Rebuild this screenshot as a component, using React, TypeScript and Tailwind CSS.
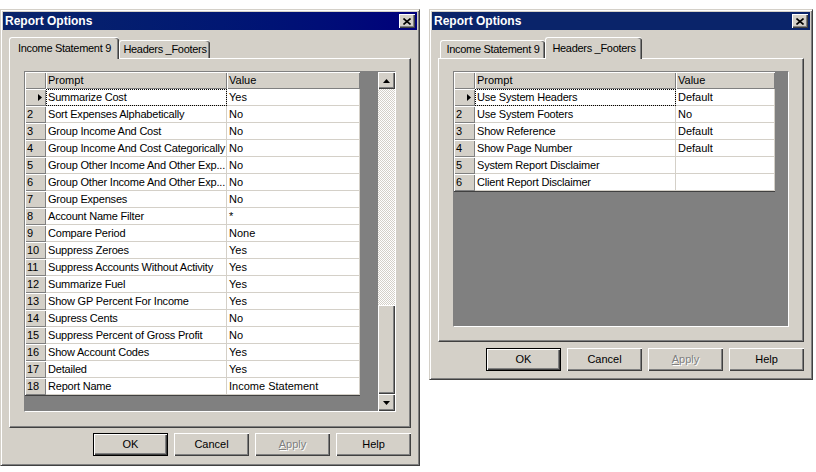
import React from 'react';

type Row = [string, string];

const incomeRows: Row[] = [
  ['Summarize Cost', 'Yes'],
  ['Sort Expenses Alphabetically', 'No'],
  ['Group Income And Cost', 'No'],
  ['Group Income And Cost Categorically', 'No'],
  ['Group Other Income And Other Exp...', 'No'],
  ['Group Other Income And Other Exp...', 'No'],
  ['Group Expenses', 'No'],
  ['Account Name Filter', '*'],
  ['Compare Period', 'None'],
  ['Suppress Zeroes', 'Yes'],
  ['Suppress Accounts Without Activity', 'Yes'],
  ['Summarize Fuel', 'Yes'],
  ['Show GP Percent For Income', 'Yes'],
  ['Supress Cents', 'No'],
  ['Suppress Percent of Gross Profit', 'No'],
  ['Show Account Codes', 'Yes'],
  ['Detailed', 'Yes'],
  ['Report Name', 'Income Statement'],
];

const headerRows: Row[] = [
  ['Use System Headers', 'Default'],
  ['Use System Footers', 'No'],
  ['Show Reference', 'Default'],
  ['Show Page Number', 'Default'],
  ['System Report Disclaimer', ''],
  ['Client Report Disclaimer', ''],
];

const raised =
  'bg-[#d4d0c8] shadow-[inset_1px_1px_0_#ffffff,inset_-1px_-1px_0_#404040,inset_-2px_-2px_0_#808080]';
const headCell = 'bg-[#d4d0c8] shadow-[inset_1px_1px_0_#ffffff,inset_-1px_-1px_0_#808080]';

const Arrow = ({ down }: { down?: boolean }) => (
  <svg width="7" height="4" viewBox="0 0 7 4">
    <polygon points={down ? '0,0 7,0 3.5,4' : '3.5,0 7,4 0,4'} fill="#000" />
  </svg>
);

const RowMark = () => (
  <svg width="4" height="7" viewBox="0 0 4 7">
    <polygon points="0,0 4,3.5 0,7" fill="#000" />
  </svg>
);

interface GridProps {
  rows: Row[];
  promptW: string;
  valueW: string;
  size: string;
  scroll?: boolean;
}

const Grid: React.FC<GridProps> = ({ rows, promptW, valueW, size, scroll }) => (
  <div className={`${size} flex border border-[#808080] border-r-white border-b-white`}>
    <div className="flex-1 bg-[#808080]">
      <div className="w-fit border-b border-[#404040]">
        <div className="flex h-[17px] leading-[16px]">
          <div className={`w-[21px] ${headCell}`} />
          <div className={`${promptW} ${headCell} pl-[2px]`}>Prompt</div>
          <div className={`${valueW} ${headCell} pl-[2px]`}>Value</div>
        </div>
        {rows.map(([p, v], i) => (
          <div key={i} className="flex h-[17px]">
            <div
              className={`w-[21px] ${headCell} leading-[17px] ${
                i === 0 ? 'flex items-center justify-end pr-[4px]' : 'pl-[2px]'
              }`}
            >
              {i === 0 ? <RowMark /> : i + 1}
            </div>
            <div
              className={`${promptW} bg-white border-r border-b border-[#d4d0c8] pl-[2px] leading-[16px] overflow-hidden whitespace-nowrap tracking-[-0.2px] ${
                i === 0 ? '[outline:1px_dotted_#000] [outline-offset:-1px]' : ''
              }`}
            >
              {p}
            </div>
            <div
              className={`${valueW} bg-white border-r border-b border-[#d4d0c8] pl-[2px] leading-[16px] overflow-hidden whitespace-nowrap`}
            >
              {v}
            </div>
          </div>
        ))}
      </div>
    </div>
    {scroll && (
      <div className="w-[17px] flex flex-col">
        <div className={`h-[17px] ${raised} flex items-center justify-center`}>
          <Arrow />
        </div>
        <div className="flex-1 bg-[repeating-conic-gradient(#d4d0c8_0%_25%,#ffffff_0%_50%)] bg-[length:2px_2px]" />
        <div className={`h-[89px] ${raised}`} />
        <div className={`h-[17px] ${raised} flex items-center justify-center`}>
          <Arrow down />
        </div>
      </div>
    )}
  </div>
);

const Buttons = () => (
  <div className="flex justify-end gap-[6px]">
    <button className="w-[75px] h-[23px] border border-black bg-[#d4d0c8] shadow-[inset_1px_1px_0_#ffffff,inset_-1px_-1px_0_#404040,inset_-2px_-2px_0_#808080]">
      OK
    </button>
    <button className={`w-[75px] h-[23px] ${raised}`}>Cancel</button>
    <button className={`w-[75px] h-[23px] ${raised} text-[#808080] [text-shadow:1px_1px_0_#ffffff]`}>
      <span className="underline">A</span>pply
    </button>
    <button className={`w-[75px] h-[23px] ${raised}`}>Help</button>
  </div>
);

const TitleBar = ({ solid }: { solid?: boolean }) => (
  <div
    className={`h-[18px] flex items-center justify-between pl-[2px] pr-[2px] ${
      solid ? 'bg-[#0a246a]' : 'bg-linear-to-r from-[#0a246a] to-[#00007b]'
    }`}
  >
    <span className="text-white font-bold text-[12px]">Report Options</span>
    <div className={`w-[16px] h-[14px] ${raised} flex items-center justify-center`}>
      <svg width="8" height="7" viewBox="0 0 8 7">
        <path d="M0.5 0.5 L7.5 6.5 M7.5 0.5 L0.5 6.5" stroke="#000" strokeWidth="1.6" />
      </svg>
    </div>
  </div>
);

const tabOn =
  'h-[22px] -mb-px relative z-10 bg-[#d4d0c8] border-t border-l border-white rounded-t-[3px] shadow-[inset_-1px_0_0_#404040,inset_-2px_0_0_#808080] flex items-center justify-center whitespace-nowrap tracking-[-0.3px]';
const tabOff =
  'h-[18px] bg-[#d4d0c8] border-t border-l border-white rounded-t-[3px] shadow-[inset_-1px_0_0_#404040,inset_-2px_0_0_#808080] flex items-center justify-center whitespace-nowrap tracking-[-0.3px]';
const panel =
  'bg-[#d4d0c8] border border-white border-r-[#404040] border-b-[#404040] shadow-[inset_-1px_-1px_0_#808080] pl-[14px] pt-[12px]';
const frame =
  'bg-[#d4d0c8] border border-[#d4d0c8] border-r-[#404040] border-b-[#404040] shadow-[inset_1px_1px_0_#ffffff,inset_-1px_-1px_0_#808080] p-[2px] flex flex-col';

export default function App() {
  return (
    <div className="w-[816px] h-[472px] bg-white flex items-start gap-[9px] pt-[9px] font-['Liberation_Sans',Arial,sans-serif] text-[11px] text-black">
      <div className={`w-[420px] h-[457px] ${frame}`}>
        <TitleBar />
        <div className="px-[6px] mt-[7px]">
          <div className="flex items-end h-[21px]">
            <div className={`w-[110px] ${tabOn}`}>Income Statement 9</div>
            <div className={`w-[91px] ${tabOff}`}>Headers _Footers</div>
          </div>
          <div className={`h-[370px] ${panel}`}>
            <Grid rows={incomeRows} promptW="w-[181px]" valueW="w-[133px]" size="w-[372px] h-[341px]" scroll />
          </div>
          <div className="mt-[5px]">
            <Buttons />
          </div>
        </div>
      </div>

      <div className={`w-[384px] h-[371px] ${frame}`}>
        <TitleBar solid />
        <div className="px-[6px] mt-[7px]">
          <div className="flex items-end h-[21px] pl-[2px]">
            <div className={`w-[105px] ${tabOff}`}>Income Statement 9</div>
            <div className={`w-[97px] ${tabOn}`}>Headers _Footers</div>
          </div>
          <div className={`h-[284px] ${panel}`}>
            <Grid rows={headerRows} promptW="w-[201px]" valueW="w-[99px]" size="w-[336px] h-[256px]" />
          </div>
          <div className="mt-[6px]">
            <Buttons />
          </div>
        </div>
      </div>
    </div>
  );
}
